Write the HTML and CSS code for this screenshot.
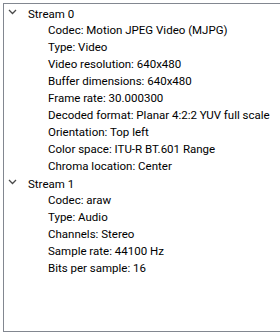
FILE: index.html
```html
<!DOCTYPE html>
<html lang="en">

<head>
    <meta charset="UTF-8">
    <title>Stream info</title>
    <link rel="stylesheet" href="styles.css">
</head>

<body>
    <!-- 트리뷰 -->
    <div class="tree">
        <ul class="root">
            <li>
                <div class="node">
                    <svg class="chev" width="9" height="6" viewBox="0 0 9 6"><path d="M1 1 L4.5 4.5 L8 1" fill="none" stroke="#4a4a4a" stroke-width="1.3"/></svg>
                    <span>Stream 0</span>
                </div>
                <ul class="sub">
                    <li>Codec: Motion JPEG Video (MJPG)</li>
                    <li>Type: Video</li>
                    <li>Video resolution: 640x480</li>
                    <li>Buffer dimensions: 640x480</li>
                    <li>Frame rate: 30.000300</li>
                    <li>Decoded format: Planar 4:2:2 YUV full scale</li>
                    <li>Orientation: Top left</li>
                    <li>Color space: ITU-R BT.601 Range</li>
                    <li>Chroma location: Center</li>
                </ul>
            </li>
            <li>
                <div class="node">
                    <svg class="chev" width="9" height="6" viewBox="0 0 9 6"><path d="M1 1 L4.5 4.5 L8 1" fill="none" stroke="#4a4a4a" stroke-width="1.3"/></svg>
                    <span>Stream 1</span>
                </div>
                <ul class="sub">
                    <li>Codec: araw</li>
                    <li>Type: Audio</li>
                    <li>Channels: Stereo</li>
                    <li>Sample rate: 44100 Hz</li>
                    <li>Bits per sample: 16</li>
                </ul>
            </li>
        </ul>
    </div>
</body>

</html>
```

FILE: styles.css
```css
html,
body {
    margin: 0;
    padding: 0;
    background-color: #fff;
}

body {
    width: 280px;
    height: 334px;
    overflow: hidden;
    font-family: Roboto, "Noto Sans", sans-serif;
    font-size: 11.5px;
    color: #000;
}

/* ul초기화 */
ul {
    margin: 0;
    padding: 0;
    list-style: none;
}

/* 트리 박스 */
.tree {
    margin: 3px 0 0 3px;
    height: 326px;
    border: 1px solid #828790;
    border-right: none;
    padding-top: 1px;
}

.node {
    display: flex;
    align-items: center;
    height: 17px;
    padding-left: 4px;
}

/* 펼침 화살표 */
.chev {
    margin: 0 11px 3px 0;
}

.sub li {
    height: 17px;
    line-height: 17px;
    padding-left: 44px;
    white-space: nowrap;
}
```
